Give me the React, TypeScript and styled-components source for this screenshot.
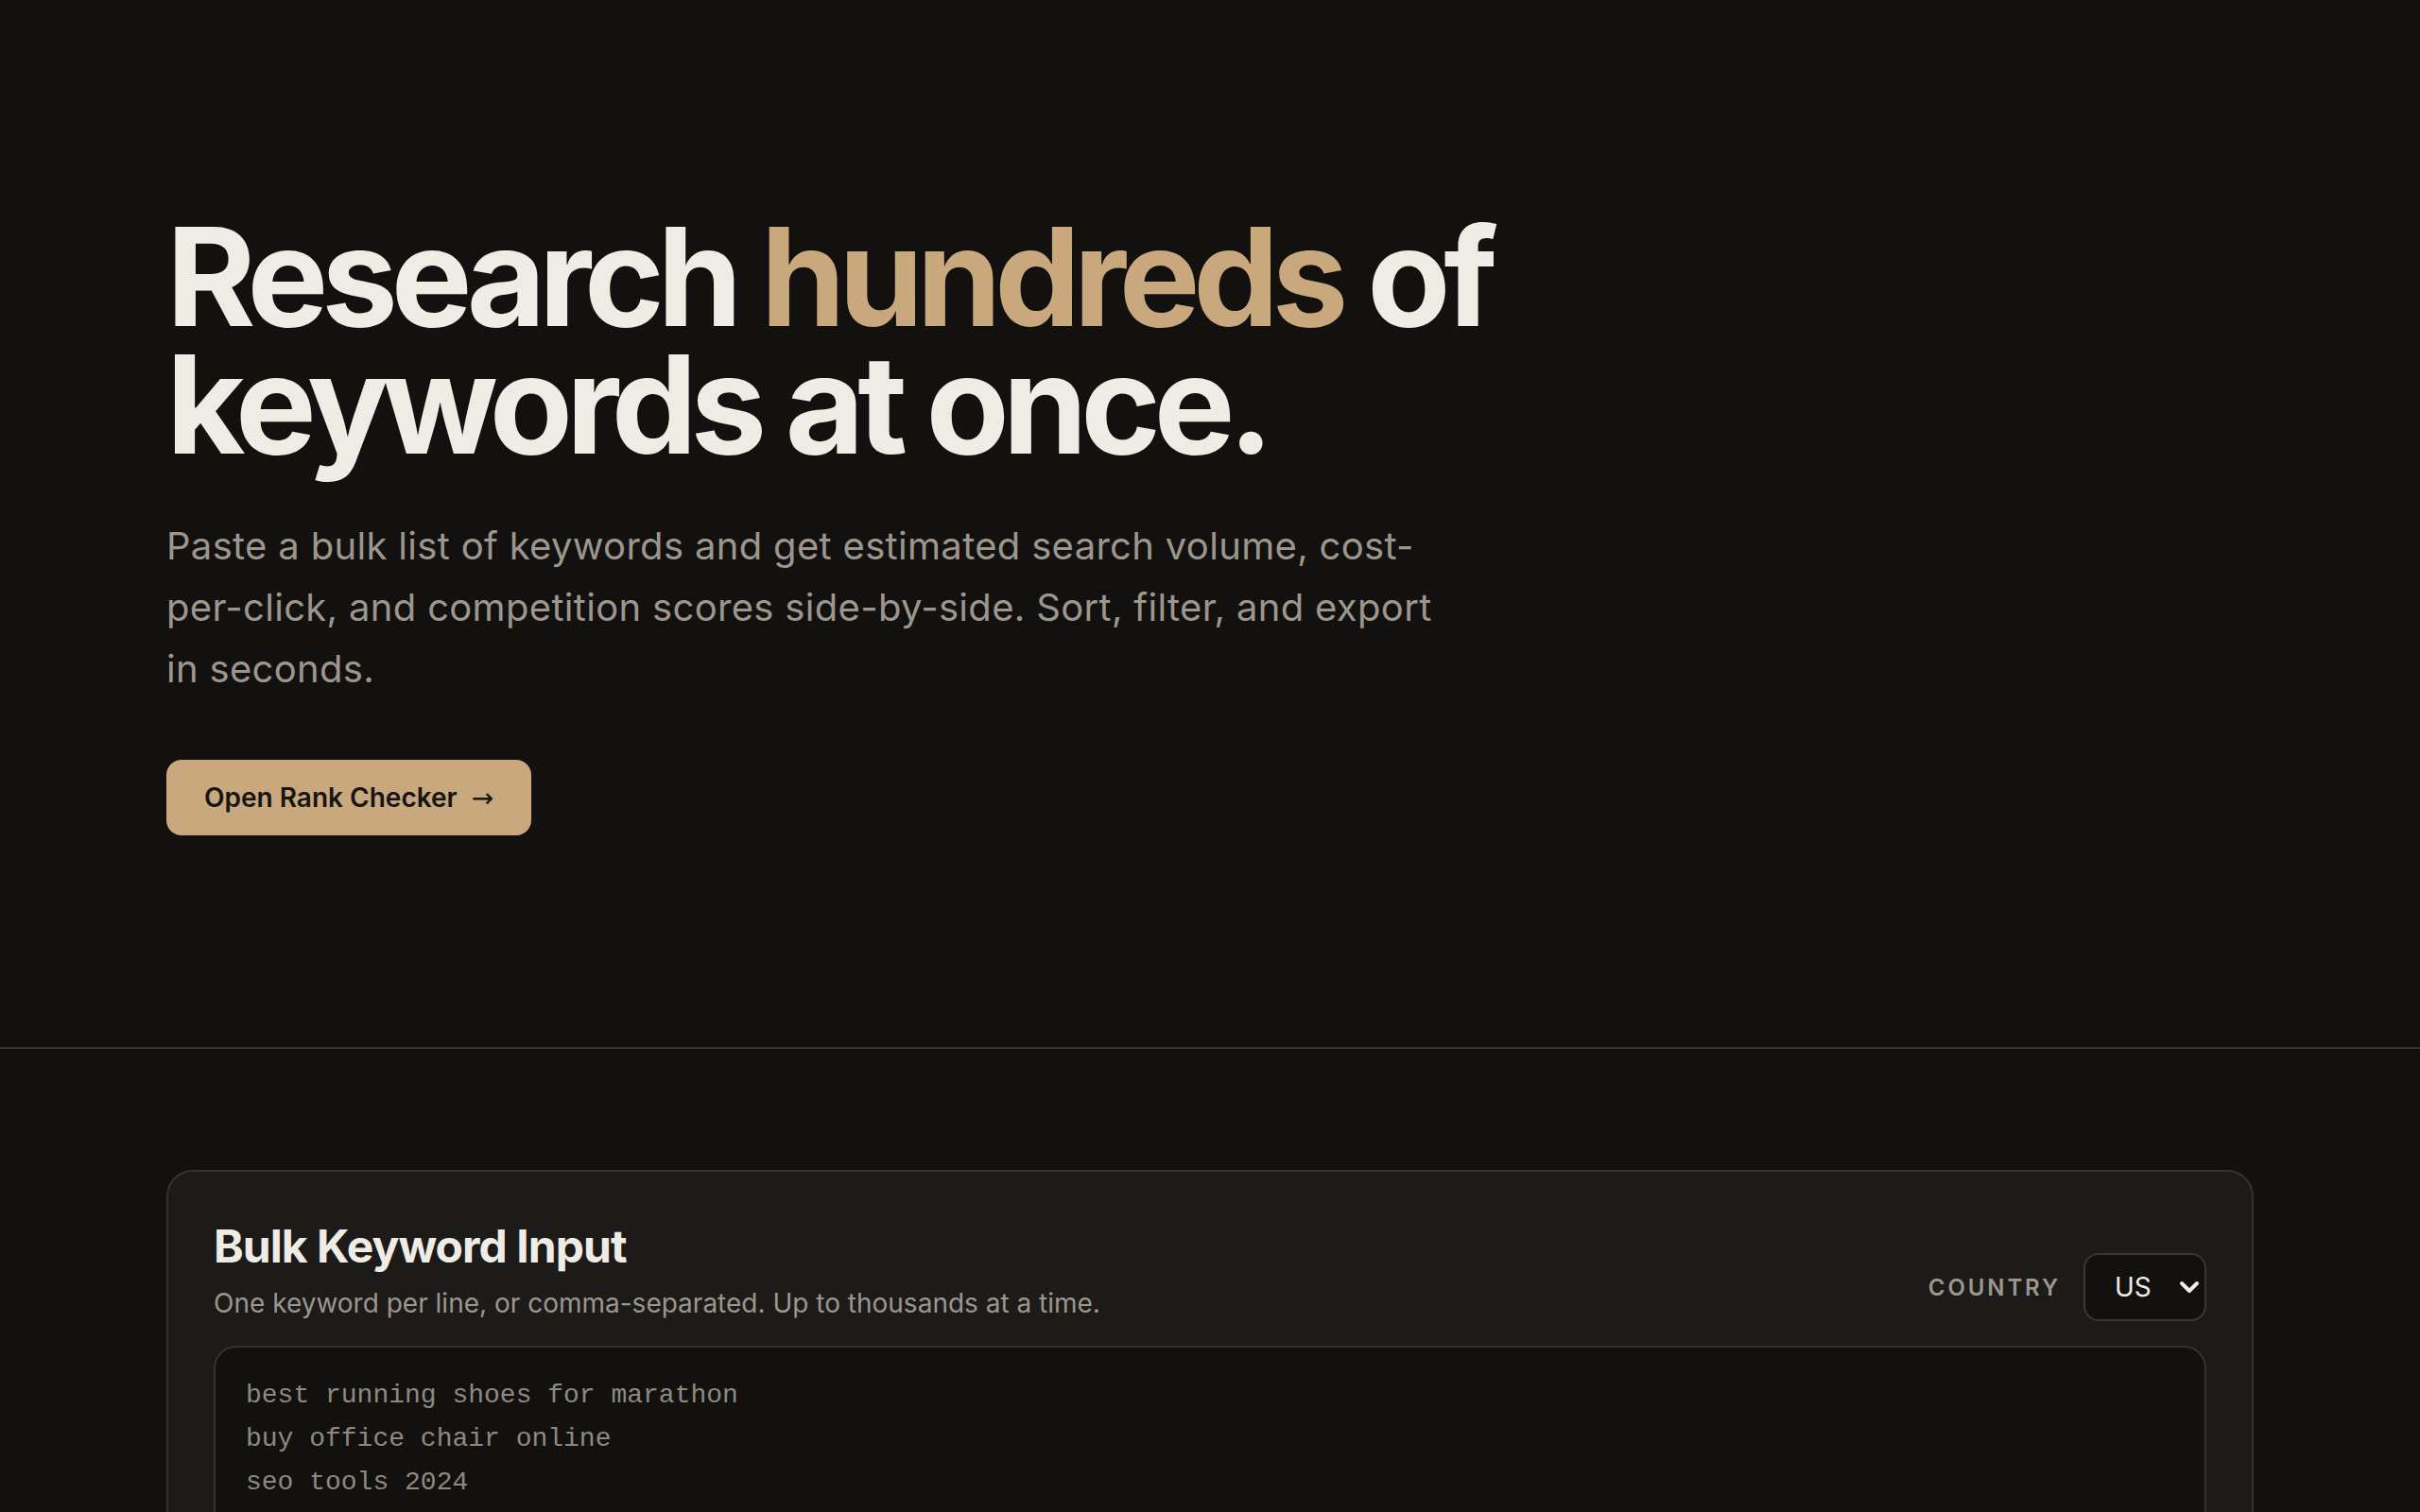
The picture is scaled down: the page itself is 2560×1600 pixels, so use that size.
import styled, { createGlobalStyle } from 'styled-components'

const GlobalStyle = createGlobalStyle`
  * {
    box-sizing: border-box;
  }
  html,
  body {
    margin: 0;
    padding: 0;
    background-color: #121110;
    font-family: Inter, 'Noto Sans', sans-serif;
    color: #efebe5;
    -webkit-font-smoothing: antialiased;
  }
`

const Page = styled.main`
  min-height: 100vh;
  background-color: #121110;
`

const Hero = styled.section`
  padding: 225px 176px 224px;
  border-bottom: 2px solid #353330;
`

const Headline = styled.h1`
  margin: 0;
  max-width: 1700px;
  font-size: 144px;
  line-height: 135px;
  font-weight: 700;
  letter-spacing: -0.05em;
  color: #efebe5;
`

const Accent = styled.span`
  color: #c8a87c;
`

const Lead = styled.p`
  margin: 50px 0 0;
  max-width: 1370px;
  font-size: 40px;
  line-height: 65px;
  font-weight: 400;
  letter-spacing: 0.008em;
  color: #9c968c;
`

const PrimaryButton = styled.button`
  display: inline-flex;
  align-items: center;
  margin-top: 64px;
  height: 80px;
  padding: 0 40px;
  border: none;
  border-radius: 16px;
  background-color: #c8a87c;
  color: #171512;
  font-family: inherit;
  font-size: 28px;
  font-weight: 600;
  cursor: pointer;
`

const Arrow = styled.span`
  margin-left: 15px;
  font-family: 'DejaVu Sans', sans-serif;
  font-weight: 400;
`

const Section = styled.section`
  padding: 128px 176px 128px;
`

const Card = styled.div`
  border: 2px solid #353330;
  border-radius: 28px;
  background-color: #1c1b19;
  padding: 48px 48px 48px;
`

const CardHeader = styled.div`
  display: flex;
  align-items: flex-end;
  justify-content: space-between;
  margin-bottom: 24px;
`

const CardTitle = styled.h2`
  margin: 0;
  font-size: 48px;
  line-height: 1.3;
  font-weight: 700;
  letter-spacing: -0.02em;
  color: #efebe5;
`

const CardSubtitle = styled.p`
  margin: 8px 0 0;
  font-size: 28px;
  line-height: 42px;
  color: #9c968c;
`

const Controls = styled.div`
  display: flex;
  align-items: center;
  gap: 24px;
  margin-bottom: 2px;
`

const ControlLabel = styled.label`
  font-size: 24px;
  font-weight: 600;
  letter-spacing: 0.12em;
  text-transform: uppercase;
  color: #9c968c;
`

const SelectWrap = styled.div`
  position: relative;
  display: inline-flex;
`

const Select = styled.select`
  appearance: none;
  height: 72px;
  width: 130px;
  padding: 0 48px 0 31px;
  border: 2px solid #3a3835;
  border-radius: 16px;
  background-color: #121110;
  color: #efebe5;
  font-family: inherit;
  font-size: 28px;
  outline: none;
`

const Chevron = styled.svg`
  position: absolute;
  right: 6px;
  top: 50%;
  width: 24px;
  height: 24px;
  transform: translateY(-50%);
  pointer-events: none;
`

const KeywordArea = styled.textarea`
  display: block;
  width: 100%;
  height: 520px;
  padding: 28px 32px;
  border: 2px solid #353330;
  border-radius: 24px;
  background-color: #121110;
  color: #8e8980;
  font-family: 'Liberation Mono', 'DejaVu Sans Mono', monospace;
  font-size: 28px;
  line-height: 45.8px;
  resize: none;
  outline: none;
`

const sampleKeywords = [
  'best running shoes for marathon',
  'buy office chair online',
  'seo tools 2024',
  'how to start a podcast',
  'vegan protein powder',
  'cheap flights to tokyo',
].join('\n')

export default function App() {
  return (
    <Page>
      <GlobalStyle />
      <Hero>
        <Headline>
          Research <Accent>hundreds</Accent> of keywords at once.
        </Headline>
        <Lead>
          Paste a bulk list of keywords and get estimated search volume, cost-per-click, and competition
          scores side-by-side. Sort, filter, and export in seconds.
        </Lead>
        <PrimaryButton type="button">
          Open Rank Checker<Arrow>→</Arrow>
        </PrimaryButton>
      </Hero>
      <Section>
        <Card>
          <CardHeader>
            <div>
              <CardTitle>Bulk Keyword Input</CardTitle>
              <CardSubtitle>One keyword per line, or comma-separated. Up to thousands at a time.</CardSubtitle>
            </div>
            <Controls>
              <ControlLabel htmlFor="country">Country</ControlLabel>
              <SelectWrap>
                <Select id="country" defaultValue="US">
                  <option value="US">US</option>
                  <option value="UK">UK</option>
                  <option value="CA">CA</option>
                  <option value="AU">AU</option>
                </Select>
                <Chevron viewBox="0 0 24 24" fill="none" stroke="#efebe5" strokeWidth="4" strokeLinecap="round" strokeLinejoin="round">
                  <path d="M4 8l8 8 8-8" />
                </Chevron>
              </SelectWrap>
            </Controls>
          </CardHeader>
          <KeywordArea defaultValue={sampleKeywords} spellCheck={false} />
        </Card>
      </Section>
    </Page>
  )
}
